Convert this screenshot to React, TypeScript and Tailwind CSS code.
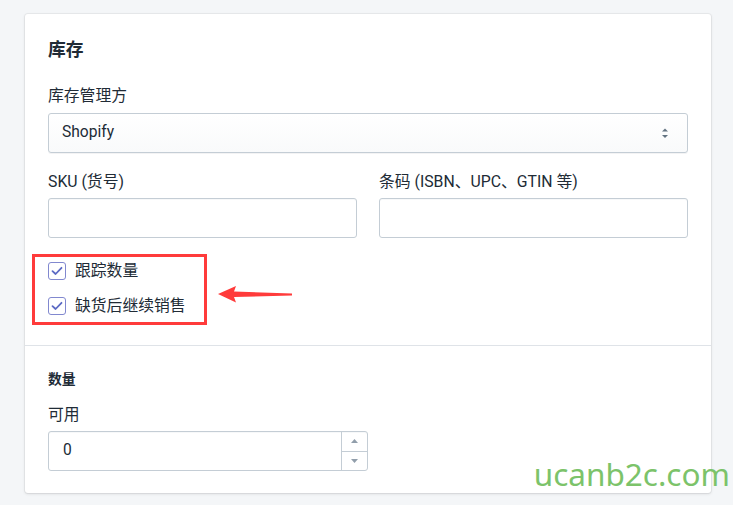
import React from 'react';

const font = { fontFamily: "Roboto, 'Noto Sans CJK SC', sans-serif" };

const Checkbox = ({ label }: { label: string }) => (
    <label className="flex items-center h-[24px] gap-[9px] text-[15.8px] text-[#212b36]">
        <span className="w-[18px] h-[18px] rounded-[3px] border border-[#8188cf] bg-white flex items-center justify-center">
            <svg width="12" height="10" viewBox="0 0 12 10" fill="none">
                <path d="M1.5 5.2 L4.6 8 L10.5 1.8" stroke="#5c6ac4" strokeWidth="1.8" strokeLinecap="round" strokeLinejoin="round" />
            </svg>
        </span>
        <span className="leading-[24px]">{label}</span>
    </label>
);

export default function App() {
    return (
        <div className="relative min-h-screen bg-[#f4f6f8] pt-[14px] overflow-hidden" style={font}>
            <div className="ml-[25px] w-[686px] bg-white rounded-[3px] shadow-[0_0_0_1px_rgba(63,63,68,0.06),0_1px_3px_0_rgba(63,63,68,0.15)] text-[#212b36]">
                {/* Inventory section */}
                <div className="px-[23px] pt-[22px] pb-[27px]">
                    <h2 className="text-[17.8px] font-semibold leading-[28px]">库存</h2>

                    <div className="mt-[20px] text-[15.8px] leading-[24px]">库存管理方</div>
                    <div className="mt-[5px] h-[40px] rounded-[3px] border border-[#c4cdd5] bg-gradient-to-b from-white to-[#f9fafb] shadow-[0_1px_0_0_rgba(22,29,37,0.05)] flex items-center justify-between pl-[13px] pr-[18px]">
                        <span className="text-[15.6px]">Shopify</span>
                        <svg width="8" height="11" viewBox="0 0 8 11">
                            <path d="M1 3.5 L4 0.5 L7 3.5 Z" fill="#637381" />
                            <path d="M1 7 L4 10 L7 7 Z" fill="#637381" />
                        </svg>
                    </div>

                    <div className="mt-[17px] grid grid-cols-2 gap-x-[22px]">
                        <div>
                            <div className="text-[15.8px] leading-[24px]">SKU (货号)</div>
                            <div className="mt-[4px] h-[40px] rounded-[3px] border border-[#c4cdd5] bg-white shadow-[inset_0_1px_0_0_rgba(99,115,129,0.05)]"></div>
                        </div>
                        <div>
                            <div className="text-[15.8px] leading-[24px]">条码 (ISBN、UPC、GTIN 等)</div>
                            <div className="mt-[4px] h-[40px] rounded-[3px] border border-[#c4cdd5] bg-white shadow-[inset_0_1px_0_0_rgba(99,115,129,0.05)]"></div>
                        </div>
                    </div>

                    <div className="relative mt-[21px] flex flex-col gap-[11px]">
                        <Checkbox label="跟踪数量" />
                        <Checkbox label="缺货后继续销售" />
                        {/* annotation */}
                        <div className="absolute left-[-16px] top-[-5px] w-[175px] h-[71px] border-[3px] border-[#ff3b3b] pointer-events-none"></div>
                        <svg className="absolute left-[170px] top-[27px]" width="76" height="17" viewBox="0 0 76 17">
                            <path d="M0 8 L18 0 L16 5.5 L74 7.6 L74 9.4 L16 11 L18 16.5 Z" fill="#ff3b3b" />
                        </svg>
                    </div>
                </div>

                {/* Quantity section */}
                <div className="border-t border-[#dfe3e8] px-[23px] pt-[23px] pb-[22px]">
                    <h3 className="text-[13.8px] font-semibold leading-[20px]">数量</h3>
                    <div className="mt-[14px] text-[15.8px] leading-[24px]">可用</div>
                    <div className="mt-[4px] w-[320px] h-[40px] rounded-[3px] border border-[#c4cdd5] bg-white flex shadow-[inset_0_1px_0_0_rgba(99,115,129,0.05)]">
                        <div className="flex-1 flex items-center pl-[14px] text-[15.6px]">0</div>
                        <div className="w-[26px] border-l border-[#c4cdd5] flex flex-col">
                            <div className="flex-1 flex items-center justify-center border-b border-[#c4cdd5]">
                                <svg width="7" height="4" viewBox="0 0 7 4"><path d="M0 4 L3.5 0 L7 4 Z" fill="#919eab" /></svg>
                            </div>
                            <div className="flex-1 flex items-center justify-center">
                                <svg width="7" height="4" viewBox="0 0 7 4"><path d="M0 0 L3.5 4 L7 0 Z" fill="#919eab" /></svg>
                            </div>
                        </div>
                    </div>
                </div>
            </div>

            {/* watermark */}
            <div className="absolute right-[3px] top-[453px] text-[31.5px] leading-[42px] text-[#7cc36a]" style={{ fontFamily: "'Noto Sans', sans-serif" }}>
                ucanb2c.com
            </div>
        </div>
    );
}
